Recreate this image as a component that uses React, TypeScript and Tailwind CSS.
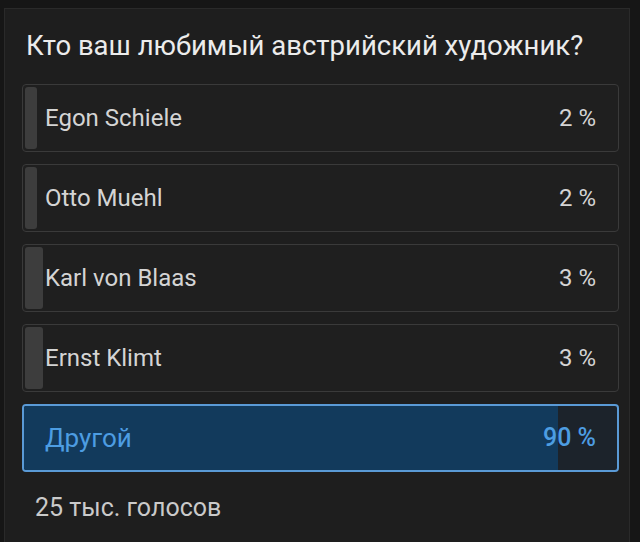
const options = [
  { name: 'Egon Schiele', pct: 2 },
  { name: 'Otto Muehl', pct: 2 },
  { name: 'Karl von Blaas', pct: 3 },
  { name: 'Ernst Klimt', pct: 3 },
];

function Option({ name, pct }: { name: string; pct: number }) {
  return (
    <div className="relative h-[68px] rounded-[4px] border border-[#3a3a3a] bg-[#1f1f1f] overflow-hidden">
      <div className="absolute left-[2px] top-[2px] bottom-[2px] rounded-[3px] bg-[#3d3d3d]" style={{ width: `max(${pct}%, 10px)` }} />
      <div className="relative flex h-full items-center justify-between pl-[22px] pr-[22px] text-[24px] text-[#d4d4d4]">
        <span>{name}</span>
        <span>{pct} %</span>
      </div>
    </div>
  );
}

export default function App() {
  return (
    <div className="w-[640px] h-[542px] bg-[#161616] pt-2 pl-1 pr-[10px] overflow-hidden" style={{ fontFamily: 'Roboto, "Noto Sans", sans-serif' }}>
      <div className="h-full bg-[#1e1e1e] border-t border-l border-r border-[#2a2a2a] pl-[17px] pr-[10px]">
        <h1 className="pt-[22px] pl-[4px] text-[27.5px] leading-[30px] text-[#ececec]">Кто ваш любимый австрийский художник?</h1>
        <div className="mt-[23px] flex flex-col gap-3">
          {options.map((o) => (
            <Option key={o.name} {...o} />
          ))}
          <div className="relative h-[68px] rounded-[4px] border-2 border-[#5a9ad6] bg-[#1c232b] overflow-hidden">
            <div className="absolute left-0 top-0 bottom-0 w-[90%] bg-[#123a5c]" />
            <div className="relative flex h-full items-center justify-between pl-[21px] pr-[21px] text-[#4d9de2]">
              <span className="text-[26px]">Другой</span>
              <span className="text-[25px] font-medium">90 %</span>
            </div>
          </div>
        </div>
        <div className="mt-[17px] pl-[13px] text-[25px] text-[#cacaca]">25 тыс. голосов</div>
      </div>
    </div>
  );
}
